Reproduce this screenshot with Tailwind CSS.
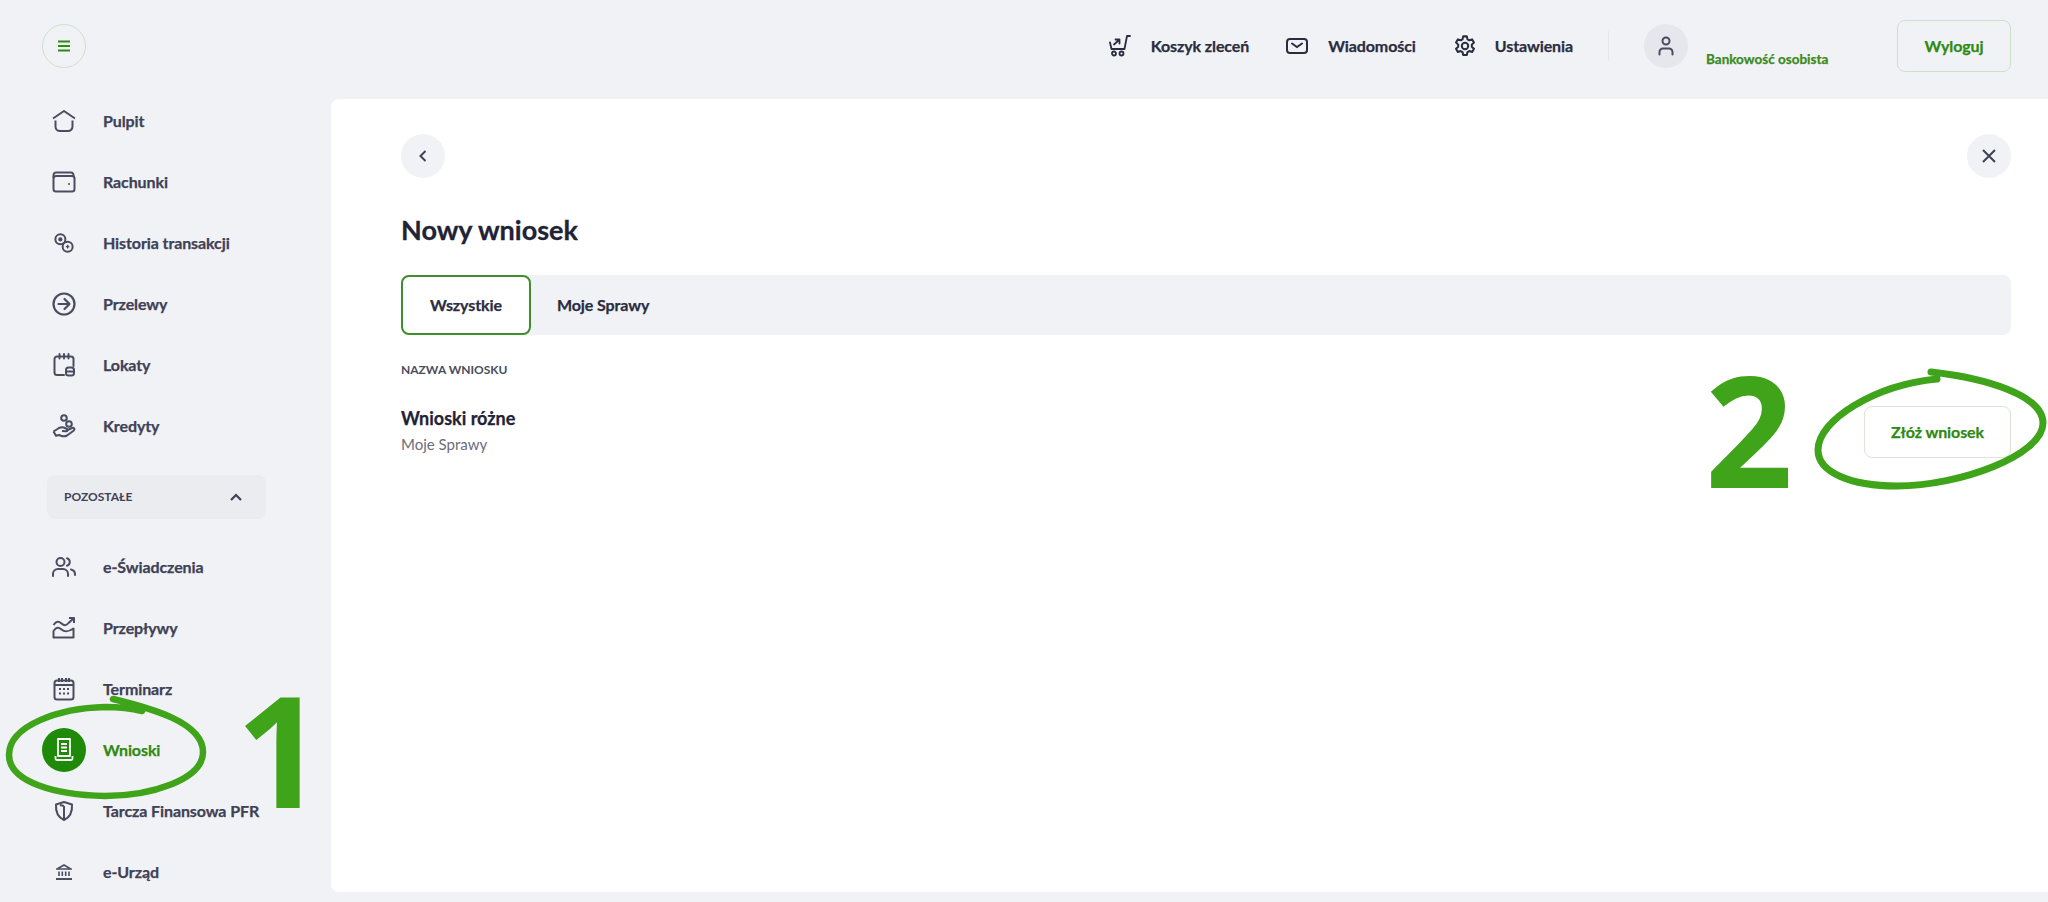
<!DOCTYPE html>
<html lang="pl">
<head>
  <meta charset="UTF-8"/>
  <meta name="viewport" content="width=device-width, initial-scale=1"/>
  <title>Nowy wniosek</title>
  <script src="https://cdn.jsdelivr.net/npm/@tailwindcss/browser@4"></script>
</head>
<body class="relative h-[902px] overflow-hidden bg-[#f1f2f5] font-['Lato',sans-serif] text-[#3f4156]">

  <div class="flex h-[902px]">
    <!-- sidebar -->
    <aside class="h-[902px] w-[331px] shrink-0 overflow-hidden pt-6">
      <button class="ml-[42px] flex h-11 w-11 items-center justify-center rounded-full border border-[#cfe0c8]">
        <svg width="14" height="12" viewBox="0 0 14 12" fill="none" stroke="#2f8a12" stroke-width="2.2"><path d="M1 1.5h12M1 6h12M1 10.5h12"/></svg>
      </button>

      <nav class="mt-[22px] text-[16px] font-bold tracking-[-0.1px] [-webkit-text-stroke:0.25px]">
        <a class="flex h-[61px] items-center gap-[17px] pl-[42px]">
          <span class="flex h-11 w-11 items-center justify-center">
            <svg width="24" height="24" viewBox="0 0 24 24" fill="none" stroke="#4a4c60" stroke-width="2" stroke-linejoin="round"><path d="M1 9.500 12 2l11 7.500"/><path d="M3.500 11.500v6a4.500 4.500 0 0 0 4.500 4.500h8a4.500 4.500 0 0 0 4.500-4.500v-6"/></svg>
          </span>Pulpit</a>
        <a class="flex h-[61px] items-center gap-[17px] pl-[42px]">
          <span class="flex h-11 w-11 items-center justify-center">
            <svg width="24" height="22" viewBox="0 0 24 22" fill="none" stroke="#4a4c60" stroke-width="2"><rect x="1.500" y="5" width="21" height="15.500" rx="2.500"/><path d="M1.500 7V4a2.500 2.500 0 0 1 2.500-2.500h15a2.500 2.500 0 0 1 2.500 2.500v2"/><circle cx="17" cy="13" r="1" fill="#4a4c60" stroke="none"/></svg>
          </span>Rachunki</a>
        <a class="flex h-[61px] items-center gap-[17px] pl-[42px]">
          <span class="flex h-11 w-11 items-center justify-center">
            <svg width="20" height="20" viewBox="0 0 22 22" fill="none" stroke="#4a4c60" stroke-width="2.200"><circle cx="7" cy="7" r="5.500"/><circle cx="15" cy="15" r="5.500"/><circle cx="7" cy="7" r="1.300" fill="#4a4c60"/><path d="M13 15h4M15 13v4" stroke-width="1.500"/></svg>
          </span>Historia transakcji</a>
        <a class="flex h-[61px] items-center gap-[17px] pl-[42px]">
          <span class="flex h-11 w-11 items-center justify-center">
            <svg width="24" height="24" viewBox="0 0 24 24" fill="none" stroke="#4a4c60" stroke-width="2.200" stroke-linecap="round" stroke-linejoin="round"><circle cx="12" cy="12" r="10.500"/><path d="M6.500 12h10.500M12.500 7l5 5-5 5"/></svg>
          </span>Przelewy</a>
        <a class="flex h-[61px] items-center gap-[17px] pl-[42px]">
          <span class="flex h-11 w-11 items-center justify-center">
            <svg width="22" height="24" viewBox="0 0 22 24" fill="none" stroke="#4a4c60" stroke-width="2" stroke-linecap="round"><path d="M11 22H4a2.500 2.500 0 0 1-2.500-2.500V6A2.500 2.500 0 0 1 4 3.500h14A2.500 2.500 0 0 1 20.500 6v7"/><path d="M6.500 1v4.500M11 1v4.500M15.500 1v4.500"/><rect x="13" y="14.500" width="8" height="8" rx="2.500"/><path d="M13.500 18.500h7"/></svg>
          </span>Lokaty</a>
        <a class="flex h-[61px] items-center gap-[17px] pl-[42px]">
          <span class="flex h-11 w-11 items-center justify-center">
            <svg width="24" height="24" viewBox="0 0 24 24" fill="none" stroke="#4a4c60" stroke-width="2" stroke-linejoin="round"><circle cx="12" cy="4" r="2.800"/><circle cx="17" cy="10" r="2.800"/><path d="M1.500 17.500 7 14c2-1 4-1 6 0l2 1c1 .8.300 2.500-1 2.300L10 17"/><path d="M14.500 16.500 20 14c2-.8 3.300 1.300 1.500 2.700L15 21.500c-2 1-4 1-6 .3l-2-.8-3 .8-2.500-4.300"/></svg>
          </span>Kredyty</a>

        <div class="ml-[47px] mt-[19px] flex h-11 w-[219px] items-center justify-between rounded-lg bg-[#ebecf0] pl-[17px] pr-[24px] text-[12px] tracking-normal [-webkit-text-stroke:0px]">
          <span>POZOSTAŁE</span>
          <svg width="12" height="8" viewBox="0 0 12 8" fill="none" stroke="#3f4156" stroke-width="2.200"><path d="M1 7l5-5 5 5"/></svg>
        </div>

        <div class="mt-[17px]">
          <a class="flex h-[61px] items-center gap-[17px] pl-[42px]">
            <span class="flex h-11 w-11 items-center justify-center">
              <svg width="24" height="20" viewBox="0 0 24 20" fill="none" stroke="#4a4c60" stroke-width="2" stroke-linecap="round"><circle cx="8.500" cy="5" r="4"/><path d="M1 19v-2a5 5 0 0 1 5-5h5a5 5 0 0 1 5 5v2"/><path d="M15 1.200a4 4 0 0 1 0 7.600M19 12.500a5 5 0 0 1 4 4.500v1"/></svg>
            </span>e-Świadczenia</a>
          <a class="flex h-[61px] items-center gap-[17px] pl-[42px]">
            <span class="flex h-11 w-11 items-center justify-center">
              <svg width="24" height="22" viewBox="0 0 24 22" fill="none" stroke="#4a4c60" stroke-width="2" stroke-linejoin="round"><path d="M1.500 8c3-4 5-4 8-1.500s5 2 7-.5l5-4.500"/><path d="M17 1h5v5"/><path d="M1.500 14c3-4 5-4 8-1.500s6 3 12-1V20.500h-20z"/></svg>
            </span>Przepływy</a>
          <a class="flex h-[61px] items-center gap-[17px] pl-[42px]">
            <span class="flex h-11 w-11 items-center justify-center">
              <svg width="22" height="24" viewBox="0 0 22 24" fill="none" stroke="#4a4c60" stroke-width="2"><rect x="1.500" y="3.500" width="19" height="19" rx="2.500"/><path d="M6 1v4M9 1v4M13 1v4M16 1v4"/><path d="M2 8h18"/><path d="M6 12h2M10 12h2M14 12h2M6 16.500h2M10 16.500h2M14 16.500h2" stroke-width="1.800"/></svg>
            </span>Terminarz</a>
          <a class="flex h-[61px] items-center gap-[17px] pl-[42px] text-[#2f8a12]">
            <span class="flex h-11 w-11 items-center justify-center rounded-full bg-[#1f8a0a]">
              <svg width="20" height="24" viewBox="0 0 20 24" fill="none" stroke="#fff" stroke-width="1.800" stroke-linejoin="round"><path d="M4 1h12v17H4z"/><path d="M7 6h6M7 9.500h6M7 13h6"/><path d="M1.500 18v2.500a1.500 1.500 0 0 0 1.500 1.500h14a1.500 1.500 0 0 0 1.500-1.500V18"/></svg>
            </span>Wnioski</a>
          <a class="flex h-[61px] items-center gap-[17px] pl-[42px]">
            <span class="flex h-11 w-11 items-center justify-center">
              <svg width="20" height="22" viewBox="0 0 20 22" fill="none" stroke="#4a4c60" stroke-width="2" stroke-linejoin="round"><path d="M10 2 2 4.500c-.5 7 1.500 12.500 8 15.500 6.500-3 8.500-8.500 8-15.500z"/><path d="M10 6v14M10 6l-4-1"/></svg>
            </span>Tarcza Finansowa PFR</a>
          <a class="flex h-[61px] items-center gap-[17px] pl-[42px]">
            <span class="flex h-11 w-11 items-center justify-center">
              <svg width="16" height="16" viewBox="0 0 16 16" fill="none" stroke="#4a4c60" stroke-width="1.600"><path d="M1 5 8 1l7 4z"/><path d="M3 7.500v4.500M6.300 7.500v4.500M9.700 7.500v4.500M13 7.500v4.500"/><path d="M0 15h16" stroke-width="2"/></svg>
            </span>e-Urząd</a>
        </div>
      </nav>
    </aside>

    <div class="flex min-w-0 flex-1 flex-col">
      <!-- top bar -->
      <header class="flex h-[92px] items-center justify-end pr-[37px] text-[16px] font-bold tracking-[-0.1px] text-[#2a2d40] [-webkit-text-stroke:0.25px]">
        <a class="flex items-center gap-[20px]">
          <svg width="22" height="22" viewBox="0 0 22 22" fill="none" stroke="#2a2d40" stroke-width="1.800" stroke-linecap="round" stroke-linejoin="round"><path d="M21 1h-3l-2.500 13H2.500L1 7.500"/><path d="M5 9.500 10 5M6.500 4.500H10.500V8.500"/><circle cx="5" cy="18.500" r="2"/><circle cx="12.500" cy="18.500" r="2"/></svg>
          Koszyk zleceń
        </a>
        <a class="ml-[37px] flex items-center gap-[20px]">
          <svg width="22" height="16" viewBox="0 0 22 16" fill="none" stroke="#2a2d40" stroke-width="2" stroke-linecap="round"><rect x="1" y="1" width="20" height="14" rx="3"/><path d="M6 5.500l5 3.500 5-3.500"/></svg>
          Wiadomości
        </a>
        <a class="ml-[38px] flex items-center gap-[19px]">
          <svg width="22" height="22" viewBox="0 0 24 24" fill="none" stroke="#2a2d40" stroke-width="2.200" stroke-linejoin="round"><circle cx="12" cy="12" r="3.500"/><path d="M10 1.500h4l.7 3.200 2 1.100 3.100-1 2 3.500-2.400 2.200v2.300l2.400 2.200-2 3.500-3.100-1-2 1.100-.7 3.200h-4l-.7-3.200-2-1.100-3.100 1-2-3.500 2.400-2.200v-2.300L2.200 8.300l2-3.500 3.100 1 2-1.100z"/></svg>
          Ustawienia
        </a>
        <span class="ml-[35px] h-[30px] w-px bg-[#e6e7eb]"></span>
        <span class="ml-[35px] flex h-11 w-11 items-center justify-center rounded-full bg-[#e6e7ec]">
          <svg width="16" height="20" viewBox="0 0 16 20" fill="none" stroke="#4a4c60" stroke-width="2" stroke-linecap="round"><circle cx="8" cy="5" r="3.500"/><path d="M1.500 18.500V16a3.500 3.500 0 0 1 3.500-3.500h6a3.500 3.500 0 0 1 3.500 3.500v2.500"/></svg>
        </span>
        <span class="ml-[18px] w-[191px] pt-[26px] text-[13.5px] tracking-normal text-[#3a8a1c]">Bankowość osobista</span>
        <button class="h-[52px] w-[114px] rounded-lg border border-[#cfe0c8] font-bold text-[#2f8a12]">Wyloguj</button>
      </header>

      <!-- panel -->
      <main class="mt-[7px] h-[793px] rounded-l-lg bg-white pl-[70px] pr-[37px] pt-[35px]">
        <div class="flex items-center justify-between">
          <button class="flex h-11 w-11 items-center justify-center rounded-full bg-[#f1f2f5]">
            <svg width="8" height="12" viewBox="0 0 8 12" fill="none" stroke="#3f4156" stroke-width="2"><path d="M6.500 1 1.500 6l5 5"/></svg>
          </button>
          <button class="flex h-11 w-11 items-center justify-center rounded-full bg-[#f1f2f5]">
            <svg width="14" height="14" viewBox="0 0 14 14" fill="none" stroke="#3f4156" stroke-width="2"><path d="M1 1l12 12M13 1 1 13"/></svg>
          </button>
        </div>

        <h1 class="mt-[35px] text-[27px] font-bold leading-[34px] text-[#1f2336] [-webkit-text-stroke:0.3px]">Nowy wniosek</h1>

        <div class="mt-[28px] flex h-[60px] items-stretch rounded-lg bg-[#f1f2f5] text-[16px] font-bold tracking-[-0.1px] [-webkit-text-stroke:0.25px]">
          <button class="w-[130px] rounded-lg border-2 border-[#3f8f2c] bg-white text-[#2a2d40]">Wszystkie</button>
          <button class="ml-[26px] text-[#2a2d40]">Moje Sprawy</button>
        </div>

        <div class="mt-[28px] text-[12px] font-bold leading-[14px] text-[#4a4c60]">NAZWA WNIOSKU</div>

        <div class="flex items-start justify-between">
          <div class="mt-[29px]">
            <div class="text-[18px] font-bold leading-[24px] text-[#1f2336] [-webkit-text-stroke:0.25px]">Wnioski różne</div>
            <div class="mt-[4px] text-[15px] leading-[20px] text-[#6b6d7c]">Moje Sprawy</div>
          </div>
          <button class="mt-[29px] h-[52px] w-[147px] rounded-lg border border-[#d9e6d3] bg-white text-[16px] font-bold tracking-[-0.1px] text-[#2f8a12] [-webkit-text-stroke:0.25px]">Złóż wniosek</button>
        </div>
      </main>
    </div>
  </div>

  <!-- hand drawn annotations on top of the screenshot -->
  <svg class="pointer-events-none absolute left-0 top-0" width="2048" height="902" viewBox="0 0 2048 902" fill="none" stroke="#3fa41a" stroke-linecap="round">
    <path stroke-width="6.500" d="M113 699C150 708 203 722 203 752C203 780 150 796 105 796C55 795 9 782 9 755C9 725 60 708 105 707C120 707 130 708 142 711"/>
    <path stroke-width="7" d="M1931 372C1985 378 2043 395 2043 423C2043 455 1960 486 1897 486C1850 486 1818 472 1818 450C1818 420 1875 385 1937 379"/>
  </svg>
  <span class="absolute left-[236px] top-[693px] font-['Open_Sans',sans-serif] text-[154px] font-bold leading-[110px] text-[#3fa41a]">1</span>
  <span class="absolute left-[1705px] top-[373px] font-['Open_Sans',sans-serif] text-[154px] font-bold leading-[110px] text-[#3fa41a]">2</span>

</body>
</html>
